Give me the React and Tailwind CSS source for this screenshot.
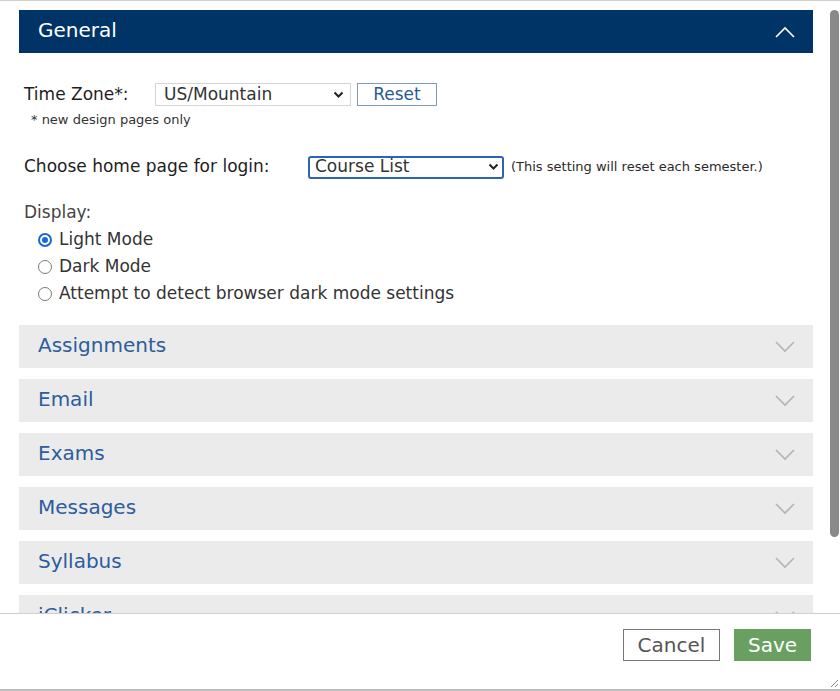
import React from 'react';

const sections = ['Assignments', 'Email', 'Exams', 'Messages', 'Syllabus', 'iClicker'];

const ChevronUp = () => (
  <svg width="20" height="12" viewBox="0 0 20 12" fill="none">
    <polyline points="1,11 10,2 19,11" stroke="#ffffff" strokeWidth="1.6" />
  </svg>
);

const ChevronDown = () => (
  <svg width="20" height="12" viewBox="0 0 20 12" fill="none">
    <polyline points="1,1 10,10 19,1" stroke="#b3b3b3" strokeWidth="1.6" />
  </svg>
);

const SelectCaret = () => (
  <svg width="11" height="8" viewBox="0 0 11 8" fill="none">
    <polyline points="1.5,1.5 5.5,5.5 9.5,1.5" stroke="#222" strokeWidth="2" />
  </svg>
);

const Radio = ({ checked, label }) => (
  <div className="flex items-center gap-[7px] h-[27px]">
    {checked ? (
      <span className="w-[14px] h-[14px] rounded-full border-[2px] border-[#1a66e0] flex items-center justify-center">
        <span className="w-[6px] h-[6px] rounded-full bg-[#1a66e0]" />
      </span>
    ) : (
      <span className="w-[14px] h-[14px] rounded-full border border-[#7a7a7a] bg-white" />
    )}
    <span className="text-[17px] text-[#333]">{label}</span>
  </div>
);

export default function App() {
  return (
    <div
      className="w-[840px] h-[691px] bg-white flex flex-col overflow-hidden"
      style={{ fontFamily: '"DejaVu Sans", sans-serif' }}
    >
      <div className="flex flex-1 min-h-0 border-t border-[#cfcfcf]">
        {/* scrollable content */}
        <div className="flex-1 overflow-hidden pt-[9px] pl-[19px] pr-[13px]">
          {/* General */}
          <div className="h-[43px] bg-[#003366] flex items-center justify-between pl-[19px] pr-[18px]">
            <span className="text-[20px] text-white leading-none pb-[3px]">General</span>
            <ChevronUp />
          </div>

          <div className="pl-[5px] pt-[30px] pb-[18px]">
            <div className="flex items-center h-[23px]">
              <span className="w-[131px] text-[17px] text-[#1e1e1e]">Time Zone*:</span>
              <div className="w-[196px] h-[23px] border border-[#d4d4d4] flex items-center justify-between pl-[8px] pr-[6px]">
                <span className="text-[17px] text-[#333]">US/Mountain</span>
                <SelectCaret />
              </div>
              <div className="ml-[6px] w-[80px] h-[23px] border border-[#7f97b8] flex items-center justify-center">
                <span className="text-[17px] text-[#2a5a97]">Reset</span>
              </div>
            </div>
            <div className="pl-[7px] pt-[4px] text-[13px] text-[#333]">* new design pages only</div>

            <div className="flex items-center h-[23px] mt-[26px]">
              <span className="w-[284px] text-[17px] text-[#1e1e1e]">Choose home page for login:</span>
              <div className="w-[196px] h-[23px] border-[2px] border-[#2a64b8] rounded-[3px] flex items-center justify-between pl-[5px] pr-[3px]">
                <span className="text-[17px] text-[#333]">Course List</span>
                <SelectCaret />
              </div>
              <span className="ml-[7px] text-[13px] text-[#2a2a2a]">(This setting will reset each semester.)</span>
            </div>

            <div className="mt-[21px] text-[17px] text-[#444]">Display:</div>
            <div className="pl-[14px] mt-[1px]">
              <Radio checked label="Light Mode" />
              <Radio label="Dark Mode" />
              <Radio label="Attempt to detect browser dark mode settings" />
            </div>
          </div>

          <div className="flex flex-col gap-[11px]">
            {sections.map((s) => (
              <div
                key={s}
                className="h-[43px] bg-[#ebebeb] flex items-center justify-between pl-[19px] pr-[18px] shrink-0"
              >
                <span className="text-[20px] text-[#2c5d9c] leading-none pb-[3px]">{s}</span>
                <ChevronDown />
              </div>
            ))}
          </div>
        </div>

        {/* scrollbar */}
        <div className="w-[14px] pt-[9px] pl-[4px]">
          <div className="w-[9px] h-[527px] rounded-full bg-[#8a8a8a]" />
        </div>
      </div>

      {/* footer */}
      <div className="h-[78px] border-t border-[#d0d0d0] border-b-2 border-b-[#bdbdbd] relative flex items-start justify-end pt-[15px] pr-[29px] gap-[14px] shrink-0">
        <button className="w-[97px] h-[32px] border border-[#777] bg-white text-[20px] text-[#555] flex items-center justify-center">
          Cancel
        </button>
        <button className="w-[77px] h-[32px] bg-[#6a9f62] text-[20px] text-white flex items-center justify-center">
          Save
        </button>
        <svg className="absolute right-[1px] bottom-[1px]" width="10" height="10" viewBox="0 0 10 10" fill="none">
          <line x1="9" y1="2" x2="2" y2="9" stroke="#888" strokeWidth="1" />
          <line x1="9" y1="6" x2="6" y2="9" stroke="#888" strokeWidth="1" />
        </svg>
      </div>
    </div>
  );
}
